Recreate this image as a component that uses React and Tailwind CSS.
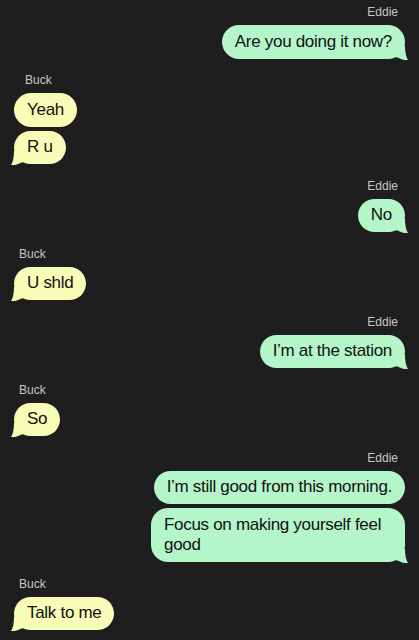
import React from "react";

const groups = [
  { from: "Eddie", me: true, msgs: ["Are you doing it now?"] },
  { from: "Buck", me: false, msgs: ["Yeah", "R u"], labelPad: "pl-[11px]" },
  { from: "Eddie", me: true, msgs: ["No"] },
  { from: "Buck", me: false, msgs: ["U shld"] },
  { from: "Eddie", me: true, msgs: ["I\u2019m at the station"] },
  { from: "Buck", me: false, msgs: ["So"] },
  { from: "Eddie", me: true, msgs: ["I\u2019m still good from this morning.", "Focus on making yourself feel good"] },
  { from: "Buck", me: false, msgs: ["Talk to me"] },
];

function Tail({ me }) {
  return (
    <svg
      width="12"
      height="14"
      viewBox="0 0 12 14"
      className={`absolute bottom-[-1px] ${me ? "right-[-3px] fill-[#b4f5c9]" : "left-[-3px] scale-x-[-1] fill-[#f7fcb6]"}`}
    >
      <path d="M0 0 H9 C9 6 10 11 12 14 C9 14.5 5 13.5 2 11.5 L0 11.5 Z" />
    </svg>
  );
}

function Bubble({ text, me, tail }) {
  return (
    <div
      className={`relative max-w-[254px] rounded-[17px] px-[13px] py-[6.5px] text-[17px] leading-[20.5px] tracking-[-0.3px] text-[#111] ${
        me ? "bg-[#b4f5c9]" : "bg-[#f7fcb6]"
      }`}
    >
      {text}
      {tail && <Tail me={me} />}
    </div>
  );
}

export default function App() {
  return (
    <div className="min-h-[640px] w-full bg-[#1e1e1e] px-[14px] pt-[5px] pb-2 font-['Liberation_Sans',Arial,sans-serif]">
      <div className="flex flex-col gap-[14.5px]">
        {groups.map((g, gi) => (
          <div key={gi} className={`flex flex-col ${g.me ? "items-end" : "items-start"}`}>
            <div
              className={`mb-[6px] text-[12px] leading-[14px] text-[#c8c8c8] ${
                g.me ? "pr-[7px]" : g.labelPad || "pl-[5px]"
              }`}
            >
              {g.from}
            </div>
            <div className={`flex flex-col gap-[4px] ${g.me ? "items-end" : "items-start"}`}>
              {g.msgs.map((m, mi) => (
                <Bubble key={mi} text={m} me={g.me} tail={mi === g.msgs.length - 1} />
              ))}
            </div>
          </div>
        ))}
      </div>
    </div>
  );
}
